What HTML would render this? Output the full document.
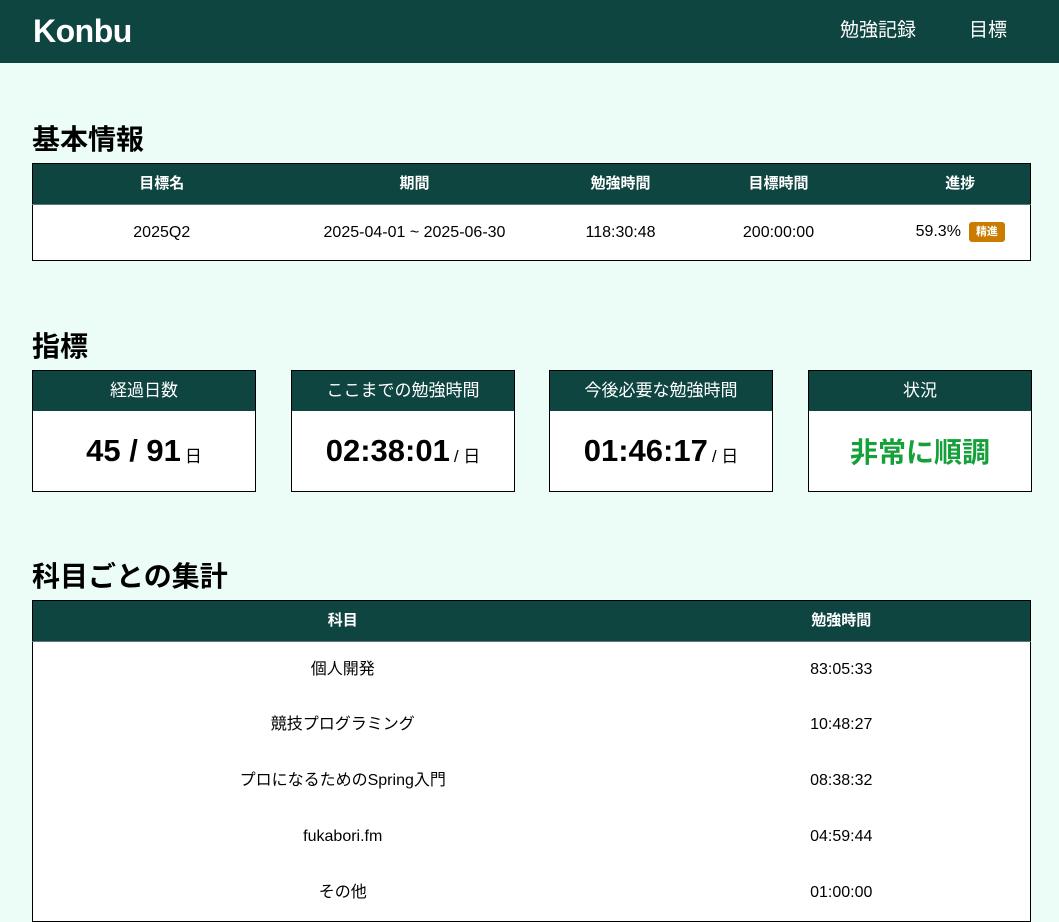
<!DOCTYPE html>
<html><head><meta charset="utf-8"><style>
*{box-sizing:border-box;margin:0;padding:0}
body{width:1059px;height:872px;overflow:hidden;background:#ecfdf8;font-family:"Liberation Sans","Noto Sans CJK JP",sans-serif;color:#000}
.hdr{height:63px;background:#0f4541;position:relative;color:#fff}
.logo{position:absolute;left:33px;top:13px;font-size:32px;line-height:36px;font-weight:bold;letter-spacing:-0.5px}
.nav{position:absolute;top:19px;font-size:19px;line-height:24px}
h2{position:absolute;left:32px;font-size:28px;font-weight:bold}
table{position:absolute;left:32px;width:999px;border-collapse:collapse;border:1px solid #000;background:#fff;table-layout:fixed}
th{background:#0f4541;color:#fff;font-size:15px;font-weight:bold;height:41px;line-height:20px;border-bottom:1px solid #5a7a78;vertical-align:middle}
td{text-align:center;font-size:16px;height:56px;line-height:20px;vertical-align:middle;padding:0}
td span.c{display:inline-block;line-height:20px;vertical-align:middle}
.badge{display:inline-block;background:#c97c00;color:#fff;font-size:11px;line-height:14px;font-weight:bold;padding:3px 7px;border-radius:3px;margin-left:8px;vertical-align:middle}
.box{position:absolute;top:370px;width:224px;height:122px;border:1px solid #000;background:#fff}
.box .t{height:40px;background:#0f4541;color:#fff;font-size:17px;text-align:center;line-height:40px}
.box .v{height:80px;display:flex;align-items:center;justify-content:center;font-weight:bold;font-size:31px}
.box .v small{font-size:17px;font-weight:normal;margin-left:4px;margin-top:6px}
</style></head><body>
<div class="hdr"><div class="logo">Konbu</div><div class="nav" style="left:840px">勉強記録</div><div class="nav" style="left:969px">目標</div></div>
<h2 style="top:118px">基本情報</h2>
<table style="top:163px"><colgroup><col style="width:258px"><col style="width:248px"><col style="width:164px"><col style="width:152px"><col></colgroup>
<tr><th>目標名</th><th>期間</th><th>勉強時間</th><th>目標時間</th><th style="padding-left:36px">進捗</th></tr>
<tr><td>2025Q2</td><td>2025-04-01 ~ 2025-06-30</td><td>118:30:48</td><td>200:00:00</td><td style="padding-left:36px"><span class="c">59.3%</span><span class="badge">精進</span></td></tr></table>
<h2 style="top:325px">指標</h2>
<div class="box" style="left:32px"><div class="t">経過日数</div><div class="v">45 / 91<small>日</small></div></div>
<div class="box" style="left:291px"><div class="t">ここまでの勉強時間</div><div class="v">02:38:01<small>/ 日</small></div></div>
<div class="box" style="left:549px"><div class="t">今後必要な勉強時間</div><div class="v">01:46:17<small>/ 日</small></div></div>
<div class="box" style="left:808px"><div class="t">状況</div><div class="v" style="color:#16a03a;font-size:28px">非常に順調</div></div>
<h2 style="top:555px">科目ごとの集計</h2>
<table style="top:600px"><colgroup><col style="width:620px"><col></colgroup>
<tr><th>科目</th><th>勉強時間</th></tr>
<tr><td><span class="c">個人開発</span></td><td><span class="c">83:05:33</span></td></tr>
<tr><td><span class="c">競技プログラミング</span></td><td><span class="c">10:48:27</span></td></tr>
<tr><td><span class="c">プロになるためのSpring入門</span></td><td><span class="c">08:38:32</span></td></tr>
<tr><td><span class="c">fukabori.fm</span></td><td><span class="c">04:59:44</span></td></tr>
<tr><td><span class="c">その他</span></td><td><span class="c">01:00:00</span></td></tr>
</table>
</body></html>
